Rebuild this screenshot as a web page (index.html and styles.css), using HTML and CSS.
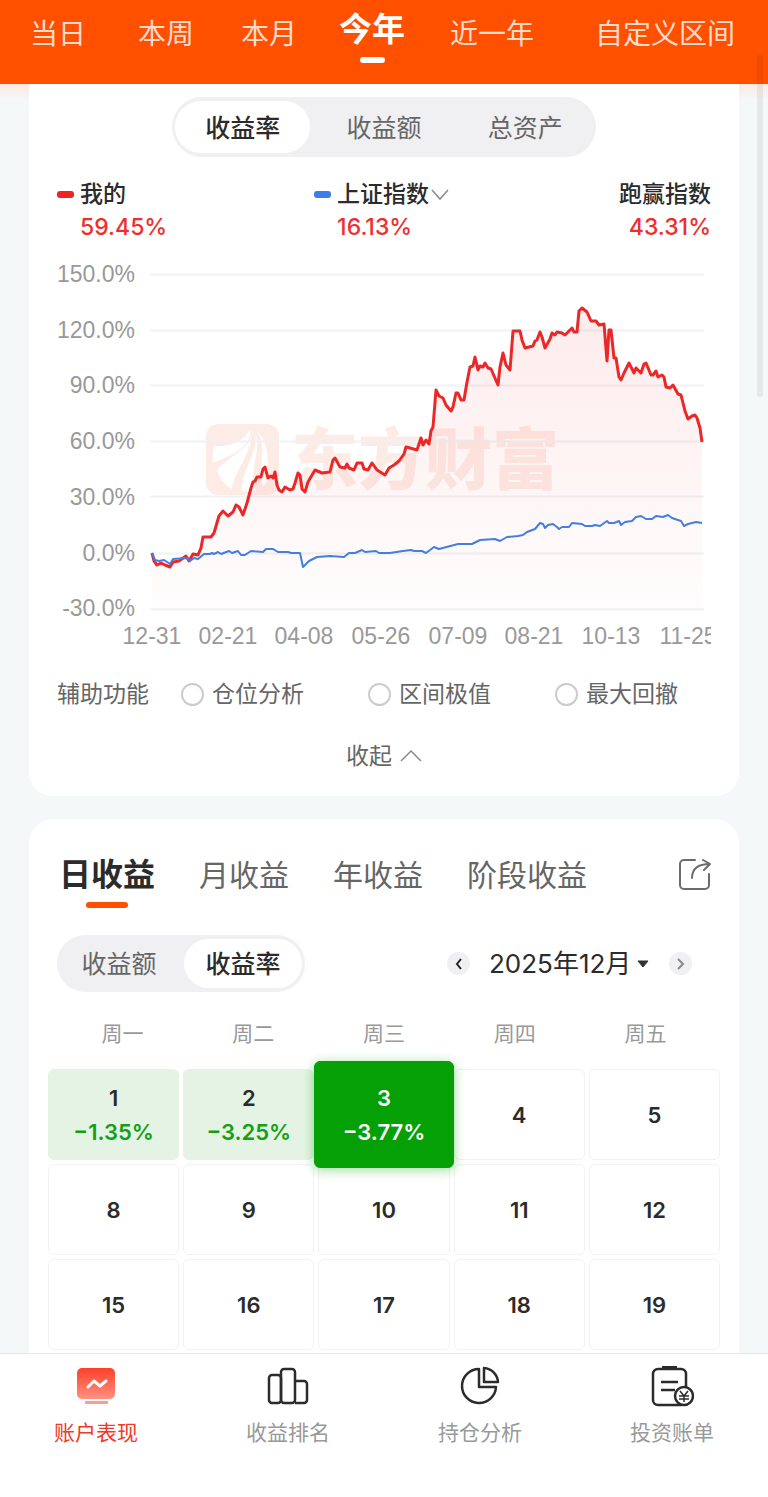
FILE: index.html
```html
<!DOCTYPE html>
<html lang="zh-CN">
<head>
    <meta charset="UTF-8">
    <meta name="viewport" content="width=device-width, initial-scale=1">
    <title>账户表现</title>
    <link rel="stylesheet" href="styles.css">
</head>
<body>
    <nav class="range-tabs">
        <a href="#" class="range-tab">当日</a>
        <a href="#" class="range-tab">本周</a>
        <a href="#" class="range-tab">本月</a>
        <a href="#" class="range-tab active">今年</a>
        <a href="#" class="range-tab">近一年</a>
        <a href="#" class="range-tab">自定义区间</a>
    </nav>

    <main class="content">
        <section class="card chart-card">
            <div class="switch switch-main">
                <button type="button" class="switch-item active">收益率</button>
                <button type="button" class="switch-item">收益额</button>
                <button type="button" class="switch-item">总资产</button>
            </div>

            <div class="legend">
                <div class="legend-item">
                    <div class="legend-name"><span class="mark red"></span>我的</div>
                    <div class="legend-value">59.45%</div>
                </div>
                <div class="legend-item">
                    <div class="legend-name">
                        <span class="mark blue"></span>
                        <span class="index-select">
                            <select aria-label="对比指数">
                                <option>上证指数</option>
                            </select>
                            <svg width="18" height="12" viewBox="0 0 18 12"><path d="M1 1l8 9 8-9" fill="none" stroke="#8a8a8a" stroke-width="1.5"/></svg>
                        </span>
                    </div>
                    <div class="legend-value">16.13%</div>
                </div>
                <div class="legend-item last">
                    <div class="legend-name">跑赢指数</div>
                    <div class="legend-value">43.31%</div>
                </div>
            </div>

            <svg class="chart" viewBox="57 255 654 400" role="img" aria-label="收益率走势">
                <defs>
                    <linearGradient id="area" x1="0" y1="300" x2="0" y2="609" gradientUnits="userSpaceOnUse">
                        <stop offset="0" stop-color="#ee2222" stop-opacity="0.09"/>
                        <stop offset="1" stop-color="#ee2222" stop-opacity="0.01"/>
                    </linearGradient>
                </defs>
                <!-- watermark -->
                <g class="watermark">
                    <rect x="206" y="424" width="73" height="71" rx="12"/>
                    <path class="hole" d="M250 430C252 445 236 454 213 463C212 456 213 450 214 446C229 447 243 442 250 430Z"/>
                    <path class="hole" d="M252 430C256 446 226 458 217 470C220 480 226 486 232 489C234 470 253 453 252 430Z"/>
                    <path class="hole" d="M254 430C262 450 240 470 242 491C246 493 252 492 256 490C246 474 264 450 254 430Z"/>
                    <path class="hole" d="M255 430C271 447 255 467 263 486C266 484 269 480 270 477C265 461 272 443 255 430Z"/>
                    <text x="291" y="484">东方财富</text>
                </g>
                <path class="grid-line" d="M150 274.500H704M150 330.500H704M150 385.500H704M150 441.500H704M150 496.500H704M150 553.500H704M150 609.500H704"/>
                <path fill="url(#area)" d="M152 553L154 561L157 565L170 567L173 562L179 561L186 556L189 561L193 554L198 555L203 537L211 537L219 516L223 511L228 516L236 505L243 515L253 482L257 477L265 467L268 478L275 472L279 490L282 492L285 487L293 489L298 473L305 492L315 470L330 472L335 458L340 467L347 464L354 470L357 463L362 463L368 470L372 463L385 475L394 465L399 461L406 447L417 450L421 438L429 444L433 427L436 390L443 398L451 411L458 393L464 400L470 367L475 357L478 370L485 363L498 385L503 353L510 370L513 331L520 331L525 348L533 346L540 332L545 348L552 333L565 335L572 328L577 332L579 311L582 308L591 321L604 324L607 361L609 330L611 330L614 358L621 380L629 363L634 373L646 363L651 375L664 377L670 388L673 385L681 395L688 419L695 415L702 442V609H152Z"/>
                <polyline class="line-mine" points="152,553 154,561 157,565 161,563 165,565 170,567 173,562 179,561 186,556 189,561 193,554 198,555 201,548 203,537 211,537 214,533 219,516 223,511 228,516 233,512 236,505 239,507 243,515 247,503 251,488 253,482 255,481 257,477 261,477 263,469 265,467 268,478 271,476 273,478 275,472 277,485 279,490 282,492 285,487 290,490 293,489 295,483 298,473 300,475 302,489 305,492 308,482 315,470 322,473 330,472 333,460 335,458 340,467 345,468 347,464 349,468 354,470 357,463 362,463 364,469 368,470 372,463 377,470 385,475 389,468 394,465 399,461 404,454 406,447 410,448 417,450 421,438 423,445 426,440 429,444 431,431 433,427 436,390 439,396 443,398 446,405 451,411 453,407 456,393 458,393 461,400 464,400 467,382 470,367 473,366 475,357 478,370 480,366 483,367 485,363 488,368 491,369 498,385 500,367 503,353 506,365 510,370 513,331 520,331 522,340 525,348 533,346 535,341 537,340 540,332 542,337 545,348 550,339 552,333 555,335 557,332 562,333 565,335 572,328 574,332 577,332 579,311 582,308 587,312 591,321 596,321 599,325 604,324 607,361 609,330 611,330 614,358 616,358 619,377 621,380 624,373 629,363 634,373 636,368 641,373 644,364 646,363 651,375 653,375 656,371 658,377 662,375 664,377 666,387 670,388 673,385 678,394 681,395 685,411 688,419 692,416 695,415 697,418 700,428 702,442"/>
                <polyline class="line-index" points="152,553 155,560 159,561 164,560 170,564 173,559 187,558 190,561 194,558 198,559 204,554 210,554 212,553 214,554 218,552 221,554 229,551 232,553 238,551 241,555 245,555 251,551 263,552 266,549 273,549 278,552 288,552 291,553 300,553 303,567 309,561 317,557 330,556 344,557 349,553 355,553 362,550 365,552 376,551 379,553 390,553 403,551 411,550 414,551 422,551 426,553 434,547 439,549 458,544 472,544 480,540 495,539 500,541 507,537 518,536 523,535 527,532 535,529 540,523 543,524 545,528 548,525 553,524 557,527 559,529 562,527 569,527 572,523 582,524 585,526 592,526 595,525 600,526 607,521 609,523 614,523 619,521 621,525 625,522 632,521 636,517 641,516 646,519 652,519 656,516 663,517 668,515 672,518 681,521 684,526 688,524 696,522 702,523"/>
                <g class="axis axis-y">
                    <text x="135" y="282">150.0%</text>
                    <text x="135" y="338">120.0%</text>
                    <text x="135" y="393">90.0%</text>
                    <text x="135" y="449">60.0%</text>
                    <text x="135" y="505">30.0%</text>
                    <text x="135" y="561">0.0%</text>
                    <text x="135" y="616">-30.0%</text>
                </g>
                <g class="axis axis-x">
                    <text x="152" y="644">12-31</text>
                    <text x="228" y="644">02-21</text>
                    <text x="304" y="644">04-08</text>
                    <text x="381" y="644">05-26</text>
                    <text x="458" y="644">07-09</text>
                    <text x="534" y="644">08-21</text>
                    <text x="611" y="644">10-13</text>
                    <text x="688" y="644">11-25</text>
                </g>
            </svg>

            <div class="tools">
                <span class="tools-title">辅助功能</span>
                <label class="tool"><input type="radio" name="tool">仓位分析</label>
                <label class="tool"><input type="radio" name="tool">区间极值</label>
                <label class="tool"><input type="radio" name="tool">最大回撤</label>
            </div>

            <button type="button" class="collapse">
                收起
                <svg width="22" height="14" viewBox="0 0 22 14"><path d="M1 12L11 2l10 10" fill="none" stroke="#8a8a8a" stroke-width="1.5"/></svg>
            </button>
        </section>

        <section class="card calendar-card">
            <div class="period-tabs">
                <a href="#" class="period-tab active">日收益</a>
                <a href="#" class="period-tab">月收益</a>
                <a href="#" class="period-tab">年收益</a>
                <a href="#" class="period-tab">阶段收益</a>
                <button type="button" class="share" aria-label="分享">
                    <svg width="34" height="34" viewBox="0 0 34 34" fill="none" stroke="#6b6b6b" stroke-width="2" stroke-linecap="round" stroke-linejoin="round">
                        <path d="M18 2H7a4 4 0 0 0-4 4v21a4 4 0 0 0 4 4h21a4 4 0 0 0 4-4V16"/>
                        <path d="M15 20C15 12 20 6 33 6M26 2l7 4-6 6"/>
                    </svg>
                </button>
            </div>

            <div class="calendar-bar">
                <div class="switch switch-small">
                    <button type="button" class="switch-item">收益额</button>
                    <button type="button" class="switch-item active">收益率</button>
                </div>
                <div class="month-picker">
                    <button type="button" class="arrow" aria-label="上个月">
                        <svg width="8" height="12" viewBox="0 0 8 12"><path d="M6 1L2 6l4 5" fill="none" stroke="#222" stroke-width="2"/></svg>
                    </button>
                    <span class="month-select">
                        <select aria-label="月份">
                            <option>2025年12月</option>
                        </select>
                        <svg width="14" height="8" viewBox="0 0 14 8"><path d="M2 1h10L7 7z" fill="#333" stroke="#333" stroke-linejoin="round"/></svg>
                    </span>
                    <button type="button" class="arrow" aria-label="下个月">
                        <svg width="8" height="12" viewBox="0 0 8 12"><path d="M1 1l5 5-5 5" fill="none" stroke="#888" stroke-width="2"/></svg>
                    </button>
                </div>
            </div>

            <div class="weekdays">
                <span>周一</span>
                <span>周二</span>
                <span>周三</span>
                <span>周四</span>
                <span>周五</span>
            </div>
            <div class="days">
                <button type="button" class="day loss">1<span class="rate">−1.35%</span></button>
                <button type="button" class="day loss">2<span class="rate">−3.25%</span></button>
                <button type="button" class="day selected">3<span class="rate">−3.77%</span></button>
                <button type="button" class="day">4</button>
                <button type="button" class="day">5</button>
                <button type="button" class="day">8</button>
                <button type="button" class="day">9</button>
                <button type="button" class="day">10</button>
                <button type="button" class="day">11</button>
                <button type="button" class="day">12</button>
                <button type="button" class="day">15</button>
                <button type="button" class="day">16</button>
                <button type="button" class="day">17</button>
                <button type="button" class="day">18</button>
                <button type="button" class="day">19</button>
            </div>
        </section>
    </main>

    <nav class="bottom-nav">
        <a href="#" class="nav-item active">
            <svg width="44" height="44" viewBox="0 0 44 44">
                <defs>
                    <linearGradient id="screen" x1="0" y1="0" x2="0" y2="1">
                        <stop offset="0" stop-color="#ff3f28"/>
                        <stop offset="1" stop-color="#ff9282"/>
                    </linearGradient>
                </defs>
                <rect x="3" y="3" width="38" height="31" rx="5" fill="url(#screen)"/>
                <rect x="11" y="36" width="23" height="3" rx="1" fill="#ff9c8e"/>
                <path d="M14 22l6-6 6 5 6-5" fill="none" stroke="#fff" stroke-width="3" stroke-linecap="round" stroke-linejoin="round"/>
            </svg>
            账户表现
        </a>
        <a href="#" class="nav-item">
            <svg width="44" height="44" viewBox="0 0 44 44" fill="none" stroke="#2b2b2b" stroke-width="2.5">
                <rect x="3" y="10" width="12" height="28" rx="3"/>
                <rect x="15" y="4" width="14" height="34" rx="3"/>
                <path d="M29 16h9a3 3 0 0 1 3 3v16a3 3 0 0 1-3 3h-9"/>
            </svg>
            收益排名
        </a>
        <a href="#" class="nav-item">
            <svg width="44" height="44" viewBox="0 0 44 44" fill="none" stroke="#2b2b2b" stroke-width="2.5" stroke-linejoin="round">
                <path d="M21 4A17 17 0 1 0 38 22H21Z"/>
                <path d="M26 3A15 15 0 0 1 40 17H26Z"/>
            </svg>
            持仓分析
        </a>
        <a href="#" class="nav-item">
            <svg width="44" height="44" viewBox="0 0 44 44" fill="none" stroke="#2b2b2b" stroke-width="2.5">
                <path d="M12 3h15" stroke-width="4"/>
                <rect x="3" y="4" width="33" height="36" rx="5"/>
                <path d="M11 17h17M11 25h14"/>
                <circle cx="34" cy="31" r="9" fill="#fff"/>
                <path d="M30 26l4 5 4-5M34 31v6M29 31h10M29 34h10" stroke-width="1.5"/>
            </svg>
            投资账单
        </a>
    </nav>

    <div class="scroll-thumb"></div>
</body>
</html>
```

FILE: styles.css
```css
* {
    box-sizing: border-box;
}

body {
    display: flex;
    flex-direction: column;
    height: 100vh;
    margin: 0;
    background-color: #f4f8f9;
    color: #2b2b2b;
    font-family: Inter, "Noto Sans CJK SC", sans-serif;
}

a {
    color: inherit;
    text-decoration: none;
}

button,
select {
    margin: 0;
    padding: 0;
    border: none;
    background: none;
    color: inherit;
    font: inherit;
    cursor: pointer;
}

select {
    appearance: none;
}

svg {
    display: block;
}

/* top tabs */
.range-tabs {
    display: grid;
    grid-template-columns: 108fr 103fr 98fr 111fr 145fr 140fr;
    align-items: center;
    flex: none;
    height: 84px;
    padding: 0 33px 16px 30px;
    background-color: #ff5000;
    color: #ffdccc;
    font-size: 28px;
    white-space: nowrap;
}

.range-tab {
    position: relative;
    justify-self: start;
    line-height: 40px;
}

.range-tab.active {
    padding-bottom: 10px;
    color: #fff;
    font-size: 33px;
    font-weight: 700;
}

.range-tab.active::after {
    content: "";
    position: absolute;
    left: 50%;
    bottom: -4px;
    width: 25px;
    height: 6px;
    margin-left: -12px;
    border-radius: 3px;
    background-color: #fff;
}

.content {
    flex: 1;
    min-height: 0;
    overflow-y: auto;
    padding: 0 29px;
    background: linear-gradient(#fbe9e3, #f4f8f9 16px);
    scrollbar-width: none;
}

.card {
    padding: 0 28px;
    background-color: #fff;
}

.chart-card {
    padding-top: 13px;
    padding-bottom: 24px;
    border-radius: 0 0 24px 24px;
}

/* pill switch */
.switch {
    display: grid;
    grid-auto-flow: column;
    grid-auto-columns: 1fr;
    border-radius: 30px;
    background-color: #f0f0f3;
    color: #666;
    font-size: 25px;
}

.switch-item {
    margin: 4px 3px;
    padding-bottom: 3px;
    border-radius: 26px;
}

.switch-item.active {
    background-color: #fff;
    color: #2b2b2b;
    font-weight: 500;
}

.switch-main {
    width: 424px;
    height: 60px;
    margin: 0 auto;
}

.switch-small {
    width: 248px;
    height: 57px;
}

/* legend */
.legend {
    display: flex;
    justify-content: space-between;
    margin-top: 22px;
}

.legend-item {
    padding-left: 23px;
}

.legend-name {
    display: flex;
    align-items: center;
    font-size: 23px;
    font-weight: 500;
    line-height: 30px;
}

.legend-value {
    color: #ee2f2f;
    font-size: 23px;
    font-weight: 500;
    line-height: 36px;
}

.legend-item.last {
    text-align: right;
}

.mark {
    width: 17px;
    height: 7px;
    margin-left: -23px;
    margin-right: 6px;
    border-radius: 3px;
}

.mark.red {
    background-color: #f02222;
}

.mark.blue {
    background-color: #3b7de9;
}

.index-select,
.month-select {
    position: relative;
}

.index-select select {
    padding-right: 20px;
}

.index-select svg {
    position: absolute;
    right: 0;
    top: 10px;
    pointer-events: none;
}

/* chart */
.chart {
    width: 100%;
    margin-top: 10px;
}

.watermark {
    fill: #fdebe6;
}

.watermark .hole {
    fill: #fff;
}

.watermark text {
    font-family: "Noto Sans CJK SC", sans-serif;
    font-size: 67px;
    font-weight: 900;
}

.grid-line {
    stroke: #eff1f4;
    stroke-width: 2;
}

.line-mine,
.line-index {
    fill: none;
    stroke-linejoin: round;
}

.line-mine {
    stroke: #ec2727;
    stroke-width: 3;
}

.line-index {
    stroke: #447fe0;
    stroke-width: 2;
}

.axis {
    fill: #999;
    font-family: "Liberation Sans", Arial, sans-serif;
    font-size: 23px;
}

.axis-y {
    text-anchor: end;
}

.axis-x {
    text-anchor: middle;
}

/* chart tools */
.tools {
    display: flex;
    align-items: center;
    gap: 64px;
    margin-top: 23px;
    color: #666;
    font-size: 23px;
    line-height: 32px;
    white-space: nowrap;
}

.tools-title {
    margin-right: -32px;
}

.tool {
    display: flex;
    align-items: center;
    gap: 8px;
}

.tool input {
    appearance: none;
    width: 23px;
    height: 23px;
    margin: 0;
    border: 2px solid #ccc;
    border-radius: 50%;
}

.tool input:checked {
    border: 7px solid #ff5000;
}

.collapse {
    display: flex;
    align-items: center;
    gap: 8px;
    margin: 30px auto 0;
    color: #666;
    font-size: 23px;
    line-height: 32px;
}

/* calendar */
.calendar-card {
    margin-top: 23px;
    padding-top: 34px;
    padding-bottom: 24px;
    border-radius: 24px;
}

.period-tabs {
    display: flex;
    align-items: center;
    gap: 44px;
    padding-left: 2px;
    color: #666;
    font-size: 30px;
    line-height: 44px;
    white-space: nowrap;
}

.period-tab {
    position: relative;
}

.period-tab.active {
    color: #2b2b2b;
    font-size: 32px;
    font-weight: 700;
}

.period-tab.active::after {
    content: "";
    position: absolute;
    left: 50%;
    bottom: -11px;
    width: 42px;
    height: 6px;
    margin-left: -21px;
    border-radius: 3px;
    background-color: #ff5000;
}

.share {
    margin-left: auto;
}

.calendar-bar {
    display: flex;
    align-items: center;
    justify-content: space-between;
    margin-top: 38px;
}

.month-picker {
    display: flex;
    align-items: center;
    gap: 19px;
    margin-right: 19px;
}

.arrow {
    display: flex;
    align-items: center;
    justify-content: center;
    width: 23px;
    height: 23px;
    border-radius: 50%;
    background-color: #f0f0f3;
}

.month-select select {
    padding-right: 18px;
    font-size: 26px;
    line-height: 36px;
}

.month-select svg {
    position: absolute;
    right: 0;
    top: 14px;
    pointer-events: none;
}

.weekdays {
    display: grid;
    grid-template-columns: repeat(5, 1fr);
    margin-top: 27px;
    color: #999;
    font-size: 21px;
    line-height: 30px;
    text-align: center;
}

.days {
    display: grid;
    grid-template-columns: repeat(5, 1fr);
    grid-auto-rows: 91px;
    gap: 4px;
    margin: 20px -9px 0;
}

.day {
    display: flex;
    flex-direction: column;
    align-items: center;
    justify-content: center;
    border: 1px solid #f2f2f4;
    border-radius: 6px;
    font-size: 22px;
    font-weight: 600;
    line-height: 34px;
}

.rate {
    color: #14a014;
}

.day.loss {
    border-color: #e4f3e4;
    background-color: #e4f3e4;
}

.day.selected {
    z-index: 1;
    margin: -8px -4px;
    border-color: #05a005;
    background-color: #05a005;
    box-shadow: 0 2px 12px rgba(5, 160, 5, 0.4);
    color: #fff;
}

.day.selected .rate {
    color: #fff;
}

/* bottom nav */
.bottom-nav {
    position: relative;
    display: grid;
    grid-template-columns: repeat(4, 1fr);
    flex: none;
    padding: 11px 0 48px;
    border-top: 1px solid #e4e6e8;
    background-color: #fff;
}

.nav-item {
    display: flex;
    flex-direction: column;
    align-items: center;
    gap: 8px;
    color: #999;
    font-size: 21px;
    line-height: 32px;
}

.nav-item.active {
    color: #f03a26;
}

.scroll-thumb {
    position: absolute;
    top: 55px;
    right: 5px;
    width: 6px;
    height: 342px;
    border-radius: 3px;
    background-color: rgba(0, 0, 0, 0.06);
}
```
